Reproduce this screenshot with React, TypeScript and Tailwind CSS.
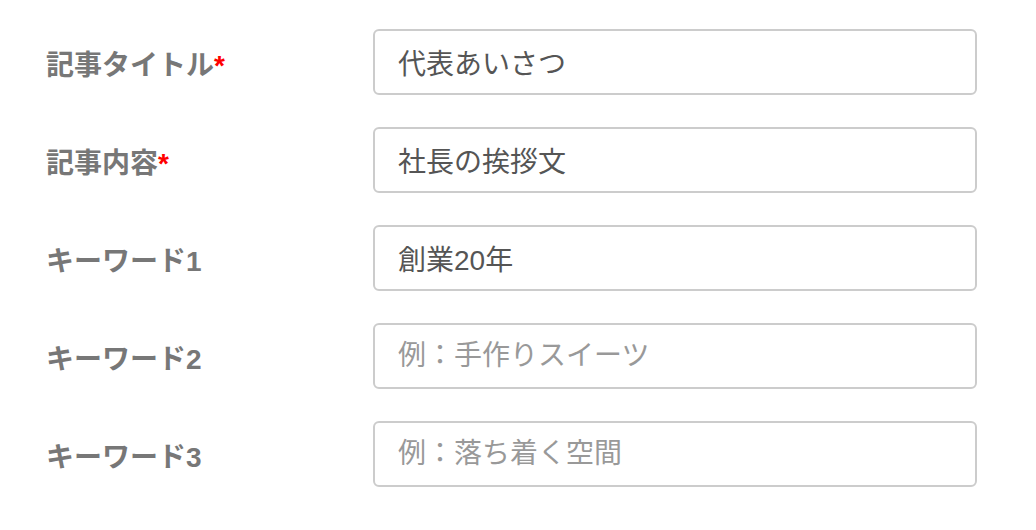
import React from "react"

interface FieldProps {
  label: string
  required?: boolean
  value?: string
  placeholder?: string
}

const fields: FieldProps[] = [
  {label: "記事タイトル", required: true, value: "代表あいさつ"},
  {label: "記事内容", required: true, value: "社長の挨拶文"},
  {label: "キーワード1", value: "創業20年"},
  {label: "キーワード2", placeholder: "例：手作りスイーツ"},
  {label: "キーワード3", placeholder: "例：落ち着く空間"},
]

const Field: React.FC<FieldProps> = ({label, required, value, placeholder}) => {
  return (
    <div className="flex items-center">
      <label className="w-[327px] pt-[8px] text-[28px] font-bold text-[#777] leading-none">
        {label}
        {required && <span className="text-[#f00]">*</span>}
      </label>
      <input
        type="text"
        readOnly
        defaultValue={value}
        placeholder={placeholder}
        className="w-[604px] h-[66px] px-[23px] border-2 border-[#ccc] rounded-[6px] bg-white text-[28px] text-[#555] placeholder:text-[#999] outline-none"
      />
    </div>
  )
}

export default function App() {
  return (
    <div
      className="w-[1036px] h-[530px] bg-white pl-[46px] pt-[29px] flex flex-col gap-[32px]"
      style={{fontFamily: '"Liberation Sans", "Noto Sans CJK JP", sans-serif'}}
    >
      {fields.map((f) => (
        <Field key={f.label} {...f} />
      ))}
    </div>
  )
}
